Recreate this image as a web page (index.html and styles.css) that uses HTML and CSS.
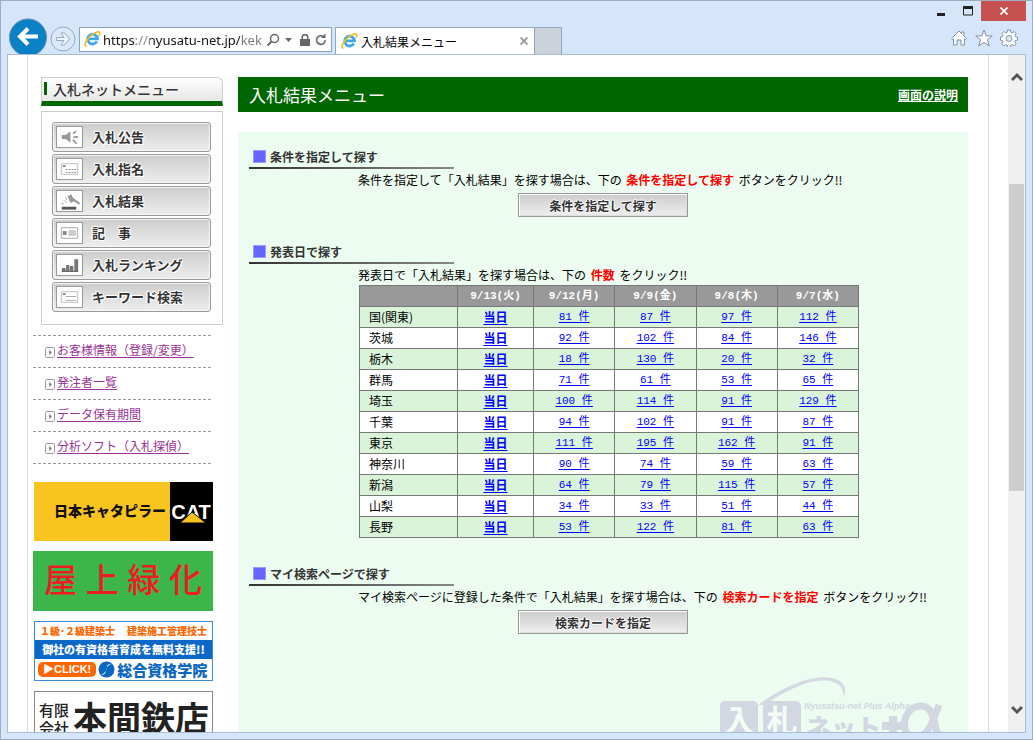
FILE: index.html
```html
<!DOCTYPE html>
<html lang="ja">
<head>
<meta charset="utf-8">
<title>入札結果メニュー</title>
<link rel="stylesheet" href="styles.css">
</head>
<body>
<svg class="defs" aria-hidden="true">
  <symbol id="ie" viewBox="0 0 18 18">
    <path d="M13.6 11.2a5.2 5.2 0 1 1 .7-2.9H5.2" fill="none" stroke="#3fa9e8" stroke-width="3"/>
    <path d="M2.6 16.2C-.6 15.4 2.400 9 7 5.100 11 1.600 16.200-.6 16.600 2.200c.1 1-.5 2.100-1 3" fill="none" stroke="#f2bd1d" stroke-width="1.800"/>
  </symbol>
  <symbol id="bullet" viewBox="0 0 10 11">
    <rect x=".5" y=".5" width="9" height="10" rx="1" fill="#fff" stroke="#999"/>
    <path d="M4 3l3 2.500L4 8z" fill="#888"/>
  </symbol>
</svg>
<div class="window">
  <header class="chrome">
    <div class="nav">
      <button class="back" aria-label="戻る"><svg width="38" height="36" viewBox="0 0 38 36"><circle cx="19" cy="19.500" r="18.500" fill="#0a81c4" stroke="#5e8db3"/><path d="M29 18.500H12M19 10.500l-8 8 8 8" fill="none" stroke="#fff" stroke-width="4"/></svg></button>
      <button class="forward" aria-label="進む"><svg width="26" height="26" viewBox="0 0 26 26"><circle cx="13" cy="13" r="12" fill="#dbe8f9" stroke="#98a8c4"/><path d="M6.500 11.500h7.500l-3-4.500h3.500l5 6-5 6H11l3-4.500H6.500z" fill="#eef4fc" stroke="#98a8c4"/></svg></button>
      <div class="address">
        <svg width="17" height="17"><use href="#ie"/></svg>
        <input class="url" type="text" value="https://nyusatu-net.jp/kek" aria-label="アドレス">
        <button aria-label="検索"><svg width="14" height="14" viewBox="0 0 14 14"><circle cx="8.500" cy="5.500" r="4" fill="none" stroke="#666" stroke-width="1.500"/><path d="M5.500 8.500L1.500 12.500" stroke="#666" stroke-width="2"/></svg></button>
        <button class="drop" aria-label="履歴"><svg width="7" height="4" viewBox="0 0 7 4"><path d="M0 0h7L3.500 4z" fill="#666"/></svg></button>
        <button class="lock" aria-label="保護"><svg width="10" height="12" viewBox="0 0 10 12"><rect y="5" width="10" height="7" fill="#666"/><path d="M2.200 5V3.500a2.800 2.800 0 0 1 5.600 0V5" fill="none" stroke="#666" stroke-width="1.500"/></svg></button>
        <button aria-label="更新"><svg width="12" height="13" viewBox="0 0 12 13"><path d="M10.200 7a4.300 4.300 0 1 1-2.200-3.700" fill="none" stroke="#666" stroke-width="1.600"/><path d="M6 5h4.500V.5z" fill="#666"/></svg></button>
      </div>
      <div class="tab">
        <svg width="17" height="17"><use href="#ie"/></svg>
        <span class="tab-title">入札結果メニュー</span>
        <button aria-label="タブを閉じる"><svg width="8" height="8" viewBox="0 0 8 8"><path d="M.5.5l7 7m0-7l-7 7" stroke="#999" stroke-width="1.800"/></svg></button>
      </div>
      <button class="new-tab" aria-label="新しいタブ"></button>
    </div>
    <div class="controls">
      <div class="win-buttons">
        <button aria-label="最小化"><svg width="10" height="10" viewBox="0 0 10 10"><path d="M1 8.500h8" stroke="#222" stroke-width="3"/></svg></button>
        <button aria-label="最大化"><svg width="10" height="10" viewBox="0 0 10 10"><path d="M0 1.500h10" stroke="#222" stroke-width="3"/><path d="M.5 1v8h9V1" fill="none" stroke="#222"/></svg></button>
        <button class="close" aria-label="閉じる"><svg width="8" height="8" viewBox="0 0 8 8"><path d="M.5.5l7 7m0-7l-7 7" stroke="#fff" stroke-width="1.700"/></svg></button>
      </div>
      <div class="tools">
        <button aria-label="ホーム"><svg width="18" height="18" viewBox="0 0 18 18"><path d="M1.500 9.500L9 2l2.500 2.500V3h2.500v4l2.500 2.500-1 1.200-1-1V16H11v-5H7v5H3.500V9.700l-1 1z" fill="#fff" stroke="#8392a8"/></svg></button>
        <button aria-label="お気に入り"><svg width="18" height="18" viewBox="0 0 18 18"><path d="M9 1l2.200 5.800 6 .2-4.800 3.800L14.200 17 9 13.300 3.800 17l1.800-6.200L.8 7l6-.2z" fill="#fff" stroke="#8392a8"/></svg></button>
        <button aria-label="ツール"><svg width="18" height="18" viewBox="0 0 18 18"><path d="M7.500 1h3l.3 2.300 1.500.6 1.900-1.400 2 2-1.300 1.900.6 1.500 2 .3v2.900l-2.200.4-.6 1.500 1.400 1.800-2.100 2.100-1.800-1.300-1.500.6-.3 2.200h-3l-.3-2.200-1.500-.6-1.800 1.300-2-2.100L3.200 13l-.7-1.500-2-.4V8.200l2.100-.4.6-1.500L1.900 4.500l2-2 1.900 1.400 1.400-.6z" fill="#fff" stroke="#8392a8"/><circle cx="9" cy="9.500" r="3" fill="#dbe8f9" stroke="#8392a8"/></svg></button>
      </div>
    </div>
  </header>
  <div class="viewport">
    <div class="page">
      <aside class="sidebar">
        <nav class="menu">
          <h2 class="menu-title"><span class="menu-bar"></span>入札ネットメニュー</h2>
          <div class="menu-list">
            <button><svg width="26" height="20" viewBox="0 0 26 20"><path d="M5 8h4l5-4v12l-5-4H5z" fill="#999"/><path d="M16.500 6.500L20 4M17 10h5M16.500 13l4 4" stroke="#888" stroke-width="1.500"/></svg><span>入札公告</span></button>
            <button><svg width="26" height="20" viewBox="0 0 26 20"><path d="M4.500 4.500h17v11h-17z" fill="#fff" stroke="#bbb"/><path d="M6 6h3v2H6z" fill="#888"/><path d="M9 10.500h11M9 13.500h11" stroke="#888" stroke-dasharray="2 1"/></svg><span>入札指名</span></button>
            <button><svg width="26" height="20" viewBox="0 0 26 20"><path d="M5 16h15v3H5z" fill="#555"/><path d="M11 5l4-2 3 7-4 2zM17 7l7 5-1 2-6-4z" fill="#999"/><path d="M10 12L7 9M7 13l-3-1M10 9L9 6" stroke="#aaa"/></svg><span>入札結果</span></button>
            <button><svg width="26" height="20" viewBox="0 0 26 20"><path d="M4.500 4.500h17v11h-17z" fill="#fff" stroke="#aaa"/><path d="M6 8h4v4H6z" fill="#888"/><path d="M12 7h8v6h-8z" fill="#ccc"/></svg><span>記　事</span></button>
            <button><svg width="26" height="20" viewBox="0 0 26 20"><path d="M5 13h4v4H5zM9.500 10h3v7h-3zM13 11h4v6h-4zM18 4h4v13h-4z" fill="#777"/><path d="M5 16.500h17" stroke="#555"/></svg><span>入札ランキング</span></button>
            <button><svg width="26" height="20" viewBox="0 0 26 20"><path d="M4.500 4.500h17v11h-17z" fill="#fff" stroke="#bbb"/><path d="M6 6h3v2H6z" fill="#888"/><path d="M9 9.500h11M9 13.500h11" stroke="#aaa"/></svg><span>キーワード検索</span></button>
          </div>
        </nav>
        <ul class="links">
          <li><svg width="10" height="11"><use href="#bullet"/></svg><a href="#">お客様情報（登録/変更）</a></li>
          <li><svg width="10" height="11"><use href="#bullet"/></svg><a href="#">発注者一覧</a></li>
          <li><svg width="10" height="11"><use href="#bullet"/></svg><a href="#">データ保有期間</a></li>
          <li><svg width="10" height="11"><use href="#bullet"/></svg><a href="#">分析ソフト（入札探偵）</a></li>
        </ul>
        <div class="banners">
          <a class="banner cat" href="#"><span class="cat-name">日本キャタピラー</span><span class="cat-logo">
            <svg width="43" height="59" viewBox="0 0 43 59"><text x="21" y="37" class="cat-text">CAT</text><path d="M10 41l12-11 14 11z" fill="#f9c41f" stroke="#000"/></svg></span></a>
          <a class="banner roof" href="#"><span>屋</span><span>上</span><span>緑</span><span>化</span></a>
          <a class="banner school" href="#">
            <span class="school-top"><span>１級･２級建築士</span><span>建築施工管理技士</span></span>
            <span class="school-mid">御社の有資格者育成を無料支援!!</span>
            <span class="school-bottom"><span class="click">▶CLICK!</span><svg width="17" height="17" viewBox="0 0 17 17"><circle cx="8.500" cy="8.500" r="8" fill="#0b67c0"/><path d="M13 3C7 3 10 8 7 11c-1 1-2 2-4 3 6 0 4-5 6-8 1-1 2-2 4-3" fill="#fff"/></svg><span class="school-name">総合資格学院</span></span>
          </a>
          <a class="banner honma" href="#"><span class="honma-kind">有限<br>会社</span><span class="honma-name">本間鉄店</span></a>
        </div>
      </aside>
      <main class="main">
        <div class="title-bar"><h1>入札結果メニュー</h1><a href="#">画面の説明</a></div>
        <div class="panel">
          <section>
            <h2 class="heading">条件を指定して探す</h2>
            <div class="section-body">
              <p>条件を指定して「入札結果」を探す場合は、下の <strong>条件を指定して探す</strong> ボタンをクリック!!</p>
              <button class="action">条件を指定して探す</button>
            </div>
          </section>
          <section>
            <h2 class="heading">発表日で探す</h2>
            <div class="section-body">
              <p>発表日で「入札結果」を探す場合は、下の <strong>件数</strong> をクリック!!</p>
              <table class="results">
                <colgroup><col class="c-area"><col class="c-today"><col class="c-day"><col class="c-day"><col class="c-day"><col class="c-day"></colgroup>
                <thead><tr><th></th><th>9/13(火)</th><th>9/12(月)</th><th>9/9(金)</th><th>9/8(木)</th><th>9/7(水)</th></tr></thead>
                <tbody>
                  <tr><th>国(関東)</th><td><a href="#">当日</a></td><td><a href="#">81 件</a></td><td><a href="#">87 件</a></td><td><a href="#">97 件</a></td><td><a href="#">112 件</a></td></tr>
                  <tr><th>茨城</th><td><a href="#">当日</a></td><td><a href="#">92 件</a></td><td><a href="#">102 件</a></td><td><a href="#">84 件</a></td><td><a href="#">146 件</a></td></tr>
                  <tr><th>栃木</th><td><a href="#">当日</a></td><td><a href="#">18 件</a></td><td><a href="#">130 件</a></td><td><a href="#">20 件</a></td><td><a href="#">32 件</a></td></tr>
                  <tr><th>群馬</th><td><a href="#">当日</a></td><td><a href="#">71 件</a></td><td><a href="#">61 件</a></td><td><a href="#">53 件</a></td><td><a href="#">65 件</a></td></tr>
                  <tr><th>埼玉</th><td><a href="#">当日</a></td><td><a href="#">100 件</a></td><td><a href="#">114 件</a></td><td><a href="#">91 件</a></td><td><a href="#">129 件</a></td></tr>
                  <tr><th>千葉</th><td><a href="#">当日</a></td><td><a href="#">94 件</a></td><td><a href="#">102 件</a></td><td><a href="#">91 件</a></td><td><a href="#">87 件</a></td></tr>
                  <tr><th>東京</th><td><a href="#">当日</a></td><td><a href="#">111 件</a></td><td><a href="#">195 件</a></td><td><a href="#">162 件</a></td><td><a href="#">91 件</a></td></tr>
                  <tr><th>神奈川</th><td><a href="#">当日</a></td><td><a href="#">90 件</a></td><td><a href="#">74 件</a></td><td><a href="#">59 件</a></td><td><a href="#">63 件</a></td></tr>
                  <tr><th>新潟</th><td><a href="#">当日</a></td><td><a href="#">64 件</a></td><td><a href="#">79 件</a></td><td><a href="#">115 件</a></td><td><a href="#">57 件</a></td></tr>
                  <tr><th>山梨</th><td><a href="#">当日</a></td><td><a href="#">34 件</a></td><td><a href="#">33 件</a></td><td><a href="#">51 件</a></td><td><a href="#">44 件</a></td></tr>
                  <tr><th>長野</th><td><a href="#">当日</a></td><td><a href="#">53 件</a></td><td><a href="#">122 件</a></td><td><a href="#">81 件</a></td><td><a href="#">63 件</a></td></tr>
                </tbody>
              </table>
            </div>
          </section>
          <section>
            <h2 class="heading">マイ検索ページで探す</h2>
            <div class="section-body">
              <p>マイ検索ページに登録した条件で「入札結果」を探す場合は、下の <strong>検索カードを指定</strong> ボタンをクリック!!</p>
              <button class="action">検索カードを指定</button>
            </div>
          </section>
          <svg class="watermark" width="228" height="72" viewBox="0 0 228 72">
            <path d="M38 30C62 12 92-1 112 3c13 3 15 11 12 19-1-8-3-14-15-16C89 3 66 16 44 30z" fill="#d5d9e2"/>
            <rect x="0" y="26" width="38" height="38" rx="5" fill="#d2d7e2"/>
            <rect x="43" y="26" width="38" height="38" rx="5" fill="#d2d7e2"/>
            <text x="19" y="57" class="wm-box">入</text>
            <text x="62" y="57" class="wm-box">札</text>
            <text x="84" y="34" class="wm-en">Nyusatsu-net Plus Alpha</text>
            <text x="86" y="62" class="wm-net">ネット</text>
            <path d="M173 41v22M162 51h22" stroke="#d2d7e2" stroke-width="8"/>
            <path d="M219 30l-6 15c-3 9-9 17-17 17-9 0-13-7-11-17 2-9 8-14 16-14 9 0 12 9 14 18 1 8 3 12 9 11" fill="none" stroke="#d2d7e2" stroke-width="7"/>
          </svg>
        </div>
      </main>
    </div>
    <div class="scrollbar">
      <svg width="12" height="10" viewBox="0 0 12 10"><path d="M1 8l5-5 5 5" fill="none" stroke="#555" stroke-width="3"/></svg>
      <div class="track"><div class="thumb"></div></div>
      <svg width="12" height="10" viewBox="0 0 12 10"><path d="M1 2l5 5 5-5" fill="none" stroke="#555" stroke-width="3"/></svg>
    </div>
  </div>
</div>
</body>
</html>
```

FILE: styles.css
```css
* { box-sizing: border-box; }

body {
  margin: 0;
  font-family: "Noto Sans CJK JP", sans-serif;
  font-size: 12px;
  color: #000;
}

button {
  margin: 0;
  padding: 0;
  border: 0;
  background: none;
  font-family: inherit;
  color: inherit;
}

h1, h2, p, ul { margin: 0; padding: 0; }
svg { display: block; flex: none; }
.defs { position: absolute; width: 0; height: 0; }

.window {
  display: flex;
  flex-direction: column;
  height: 100vh;
  padding: 0 6px 6px;
  border: 1px solid #9cadc4;
  background: #d5e5fa;
}

/* Browser chrome */
.chrome {
  display: flex;
  justify-content: space-between;
  align-items: flex-end;
  height: 53px;
  flex: none;
}

.nav { display: flex; align-items: flex-end; padding-left: 2px; }
.forward { margin: 0 3px 2px 3px; }

.address {
  display: flex;
  align-items: center;
  width: 253px;
  height: 25px;
  margin-bottom: 2px;
  padding: 0 4px;
  border: 1px solid #8ea3c2;
  background: #fff;
}

.url {
  flex: 1;
  min-width: 0;
  height: 22px;
  margin-left: 2px;
  padding: 0;
  border: 0;
  outline: 0;
  background: linear-gradient(90deg, #111 33px, #888 33px 47px, #111 47px 137px, #777 137px);
  background-clip: text;
  color: transparent;
  font-family: "Noto Sans", sans-serif;
  font-size: 13px;
}

.drop { margin: 0 8px 0 5px; }
.lock { margin-right: 5px; }

.tab {
  display: flex;
  align-items: center;
  width: 200px;
  height: 27px;
  margin-left: 3px;
  padding: 0 6px 0 5px;
  border: 1px solid #93a6c2;
  border-bottom: 0;
  background: #fff;
}

.tab-title { flex: 1; padding-left: 3px; }

.new-tab {
  width: 27px;
  height: 27px;
  border: 1px solid #93a6c2;
  border-width: 1px 1px 0 0;
  background: #cbd2da;
}

.controls {
  display: flex;
  flex-direction: column;
  align-items: flex-end;
  align-self: stretch;
}

.win-buttons { display: flex; }

.win-buttons button {
  display: flex;
  align-items: center;
  justify-content: center;
  width: 27px;
  height: 20px;
}

.win-buttons .close { width: 45px; background: #c75050; }
.tools { display: flex; gap: 7px; padding: 8px 8px 0 0; }

/* Page area */
.viewport {
  display: flex;
  flex: 1;
  min-height: 0;
  overflow: hidden;
  border: 1px solid #a9bcd5;
  background: #fff;
}

.page {
  display: flex;
  flex: 1;
  min-width: 0;
  margin: 0 19px;
  padding: 22px 20px 0 5px;
  border: 1px solid #ddd;
  border-width: 0 1px;
  gap: 15px;
}

.sidebar { flex: none; width: 190px; }

.menu {
  margin-left: 8px;
  border-bottom: 1px solid #ccc;
}

.menu-title {
  display: flex;
  align-items: center;
  gap: 6px;
  height: 29px;
  padding: 0 0 2px 2px;
  border: 1px solid #ccc;
  border-bottom: 5px solid #060;
  border-top-right-radius: 6px;
  background: linear-gradient(#fff, #e6e6e6);
  font-size: 14px;
  font-weight: 500;
  color: #333;
}

.menu-bar { width: 3px; height: 13px; background: #060; }

.menu-list {
  display: flex;
  flex-direction: column;
  gap: 2px;
  margin-top: 5px;
  padding: 10px 11px 12px 10px;
  border: 1px solid #ccc;
  border-bottom: 0;
}

.menu-list button {
  display: flex;
  align-items: center;
  gap: 9px;
  height: 30px;
  padding: 0 3px;
  border: 1px solid #999;
  border-radius: 3px;
  background: linear-gradient(#ccc, #eee);
  box-shadow: inset 0 0 0 1px #f6f6f6;
  font-size: 13px;
  font-weight: 700;
  color: #333;
  text-shadow: 1px 0 #fff, -1px 0 #fff, 0 1px #fff, 0 -1px #fff, 1px 1px 1px #fff, -1px -1px 1px #fff;
}

.menu-list span { padding-bottom: 2px; }

.menu-list svg {
  width: 27px;
  height: 22px;
  border: 1px solid #999;
  background: #fff;
}

.links {
  width: 178px;
  margin-top: 10px;
  border-top: 1px dashed #999;
  list-style: none;
}

.links li {
  display: flex;
  align-items: center;
  gap: 2px;
  height: 32px;
  padding: 0 0 5px 12px;
  border-bottom: 1px dashed #999;
}

.links svg { margin-top: 7px; }
.links a { color: #939; text-underline-offset: 2px; white-space: nowrap; }

/* Banners */
.banners { display: flex; flex-direction: column; gap: 10px; margin-top: 18px; }

.banner {
  display: flex;
  height: 60px;
  margin-left: 1px;
  margin-right: 10px;
  text-decoration: none;
}

.cat { height: 59px; background: #f9c41f; }

.cat-name {
  flex: 1;
  padding-left: 20px;
  font-size: 14px;
  font-weight: 900;
  line-height: 57px;
  color: #111;
  white-space: nowrap;
}

.cat-logo { background: #000; }

.cat-text {
  font-family: "Liberation Sans", sans-serif;
  font-size: 20px;
  font-weight: 700;
  text-anchor: middle;
  fill: #fff;
}

.roof {
  align-items: center;
  justify-content: space-between;
  margin-left: 0;
  padding: 0 11px 6px 11px;
  background: #3cb54a;
  font-size: 33px;
  font-weight: 500;
  line-height: 54px;
  color: #ed1c24;
}

.school { flex-direction: column; border: 1px solid #3b8bd6; background: #fff; font-weight: 900; white-space: nowrap; }

.school-top {
  display: flex;
  justify-content: space-between;
  padding: 0 5px;
  font-size: 10px;
  line-height: 18px;
  color: #f60;
}

.school-mid { background: #0b67c8; font-size: 11px; line-height: 19px; color: #fff; text-align: center; }
.school-bottom { display: flex; align-items: center; gap: 2px; flex: 1; padding-left: 3px; }

.click {
  padding: 0 5px;
  border-radius: 5px;
  background: #f60;
  font-family: "Liberation Sans", "Noto Sans CJK JP", sans-serif;
  font-size: 11px;
  font-weight: 700;
  line-height: 15px;
  color: #fff;
}

.school-name { font-size: 15px; line-height: 18px; color: #0b67c0; }

.honma {
  align-items: flex-start;
  gap: 4px;
  padding-left: 4px;
  border: 1px solid #888;
  color: #222;
  white-space: nowrap;
}

.honma-kind { padding-top: 9px; font-size: 15px; line-height: 18px; font-weight: 500; }
.honma-name { font-size: 34px; line-height: 50px; font-weight: 700; }

/* Main column */
.main { display: flex; flex-direction: column; gap: 20px; flex: 1; min-width: 0; }

.title-bar {
  display: flex;
  align-items: center;
  justify-content: space-between;
  flex: none;
  height: 35px;
  padding: 0 10px 0 11px;
  background: #060;
  color: #fff;
}

.title-bar h1 { font-size: 17px; font-weight: 400; }
.title-bar a { color: #fff; font-weight: 700; }

.panel {
  display: flex;
  flex-direction: column;
  gap: 27px;
  flex: none;
  padding: 17px 20px 17px 11px;
  background: #edfcf0;
}

.heading {
  display: flex;
  align-items: center;
  gap: 4px;
  width: 205px;
  height: 20px;
  padding: 0 0 5px 4px;
  background: linear-gradient(90deg, #333, #888) bottom / 100% 2px no-repeat;
  font-size: 12px;
  font-weight: 700;
  color: #333;
}

.heading::before { content: ""; width: 11px; height: 11px; border: 1px solid #99f; background: #66f; }
.section-body { padding-left: 109px; }
.section-body p { line-height: 21px; white-space: nowrap; }
.section-body strong { margin: 0 2px; color: #f00; }

.action {
  display: block;
  width: 170px;
  height: 24px;
  margin: 3px 0 0 160px;
  border: 1px solid #999;
  background: linear-gradient(#ccc, #eee);
  box-shadow: inset 1px 1px #fff, inset -1px -1px #ddd;
  font-size: 12px;
  font-weight: 700;
  color: #333;
  text-shadow: 1px 0 #fff, -1px 0 #fff, 0 1px #fff, 0 -1px #fff;
}

.results {
  width: 500px;
  margin: 0 0 1px 1px;
  border-collapse: collapse;
  table-layout: fixed;
}

.c-area { width: 98px; }
.c-today { width: 76px; }

.results th, .results td {
  height: 21px;
  padding: 0;
  border: 1px solid #777;
  font-family: "Liberation Mono", "Noto Sans CJK JP", monospace;
  font-size: 11px;
  line-height: 18px;
  text-align: center;
}

.results thead th { background: #999; color: #fff; }
.results tbody tr { background: #fff; }
.results tbody tr:nth-child(odd) { background: #daf4da; }

.results tbody th {
  padding-left: 9px;
  font-family: inherit;
  font-size: 12px;
  font-weight: 400;
  text-align: left;
}

.results td:nth-child(2) { font-family: inherit; font-size: 12px; font-weight: 700; }
.results a { color: #00f; text-underline-offset: 2px; }

.watermark { align-self: flex-end; margin-top: 14px; }
.wm-box { font-family: "Noto Sans CJK JP", sans-serif; font-size: 31px; font-weight: 700; text-anchor: middle; fill: #f4fcf6; }
.wm-en { font-family: "Liberation Sans", sans-serif; font-size: 9px; font-weight: 700; font-style: italic; fill: #d2d7e2; }
.wm-net { font-family: "Noto Sans CJK JP", sans-serif; font-size: 25px; font-weight: 900; fill: #d2d7e2; }

/* Scrollbar */
.scrollbar {
  display: flex;
  flex-direction: column;
  align-items: center;
  flex: none;
  width: 17px;
  padding: 17px 0;
  background: #f0f0f0;
}

.track { display: flex; flex-direction: column; flex: 1; width: 15px; padding: 102px 0 0; }
.thumb { height: 59%; background: #cdcdcd; }
```
